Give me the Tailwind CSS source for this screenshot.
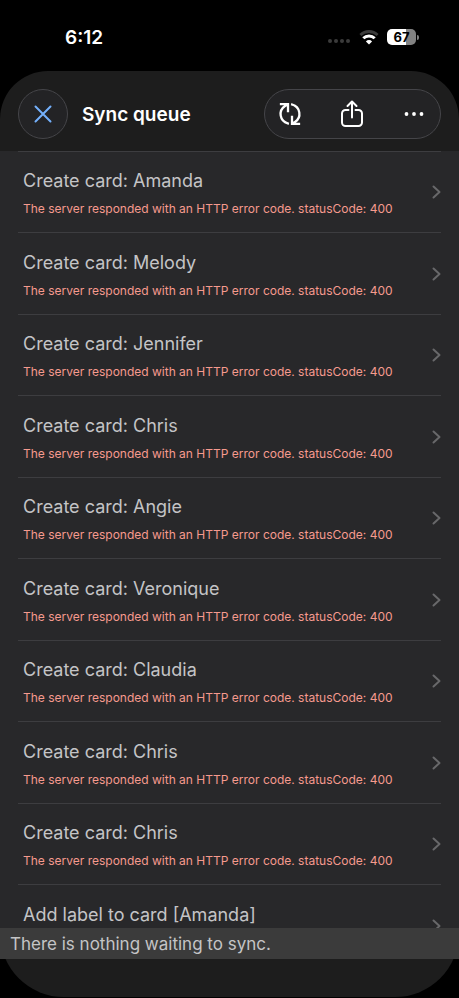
<!DOCTYPE html>
<html lang="en">
<head>
<meta charset="utf-8">
<meta name="viewport" content="width=device-width, initial-scale=1">
<title>Sync queue</title>
<script src="https://cdn.jsdelivr.net/npm/@tailwindcss/browser@4"></script>
</head>
<body class="bg-black font-['Inter','Liberation_Sans',sans-serif]">
<div class="flex h-screen flex-col bg-black pb-px">

  <!-- Status bar -->
  <div class="flex h-[71px] shrink-0 items-start justify-between pt-[26px] pr-10 pl-[65px]">
    <time class="text-[19px] leading-6 font-semibold text-white">6:12</time>
    <div class="flex h-[22px] items-center">
      <svg class="mt-2 mr-2 h-1 w-6" viewBox="0 0 24 4" fill="#3b3b3b" aria-hidden="true"><circle cx="3" cy="2" r="2"/><circle cx="9" cy="2" r="2"/><circle cx="15" cy="2" r="2"/><circle cx="21" cy="2" r="2"/></svg>
      <svg class="mr-2 h-[15px] w-5" viewBox="0 0 20 15" fill="none" aria-hidden="true">
        <path d="M1.400 5A12.300 12.300 0 0 1 18.600 5" stroke="#3b3b3b" stroke-width="2.800"/>
        <path d="M4.300 8.300a8.100 8.100 0 0 1 11.400 0" stroke="#fff" stroke-width="3"/>
        <path d="M10 14.500 6.900 11.400a4.400 4.400 0 0 1 6.200 0Z" fill="#fff"/>
      </svg>
      <div class="flex h-4 w-[29px] items-center justify-center rounded-[5px] bg-linear-to-r from-white from-67% to-[#828282] to-67% text-[13px] leading-4 font-bold text-black">67</div>
      <div class="ml-px h-[5px] w-[2px] rounded-r-full bg-[#828282]"></div>
    </div>
  </div>

  <!-- Header -->
  <header class="flex h-20 shrink-0 items-center rounded-t-[48px] bg-[#1d1d1d] px-[18px] pt-[6px]">
    <button type="button" aria-label="Close" class="flex size-[50px] shrink-0 items-center justify-center rounded-full border border-[#454549] bg-[#232325]">
      <svg class="size-[18px]" viewBox="0 0 18 18" fill="none" stroke="#74b0fb" stroke-width="2" stroke-linecap="round"><path d="m1.500 1.500 15 15m0-15-15 15"/></svg>
    </button>
    <h1 class="ml-[14px] pt-0.5 text-[19px] leading-6 font-semibold text-white">Sync queue</h1>
    <div class="ml-auto flex h-[50px] w-[177px] items-center justify-between rounded-full border border-[#454549] bg-[#232325] pr-3 pl-[11px]">
      <button type="button" aria-label="Sync" class="flex h-8 w-7 items-center justify-center">
        <svg class="h-6 w-6" viewBox="0 0 24 24" fill="none" stroke="#fff" stroke-width="2.300" stroke-linecap="square"><path d="M9.800 21.500A9.700 9.700 0 0 1 7 4L9 2.700M3 2.200h7v7M14.200 2.500A9.700 9.700 0 0 1 17 20L15 21.300M21 21.800h-7v-7"/></svg>
      </button>
      <button type="button" aria-label="Share" class="flex h-8 w-7 items-center justify-center">
        <svg class="h-7 w-6" viewBox="0 0 24 28" fill="none" stroke="#fff" stroke-width="2" stroke-linecap="round" stroke-linejoin="round"><path d="M8.500 10H5.500a3.500 3.500 0 0 0-3.500 3.500V22.500A3.500 3.500 0 0 0 5.500 26h13a3.500 3.500 0 0 0 3.500-3.500v-9a3.500 3.500 0 0 0-3.500-3.500h-3M12 17.500V2M7.500 6 12 1.500 16.500 6"/></svg>
      </button>
      <button type="button" aria-label="More" class="flex h-8 w-7 items-center justify-center">
        <svg class="h-5 w-5" viewBox="0 0 20 20" fill="#fff"><circle cx="2.500" cy="10" r="1.900"/><circle cx="10" cy="10" r="1.900"/><circle cx="17.500" cy="10" r="1.900"/></svg>
      </button>
    </div>
  </header>

  <!-- Queue -->
  <main class="min-h-0 flex-1 overflow-y-auto bg-[#28282a] px-[18px] [scrollbar-width:none]">
    <ul id="queue"></ul>
  </main>
  <p role="status" class="relative z-10 shrink-0 bg-[#3b3b3b] px-[10px] pt-[5px] pb-[3px] text-[17px] leading-[23px] text-[#c4c4c6]">There is nothing waiting to sync.</p>
  <div class="-mt-[26px] h-16 shrink-0 rounded-b-[64px] bg-[#1d1d1d]"></div>
</div>

<template id="row">
  <li class="h-[81px] border-t border-[#3d3d40] even:h-[82px]">
    <a href="#" class="flex h-full items-center justify-between pl-[5px]">
      <span class="block pt-0.5">
        <span data-title class="block text-[18px] leading-6 whitespace-nowrap text-[#c4c4c6]"></span>
        <span data-error class="mt-2 block h-4 text-[12px] leading-4 whitespace-nowrap text-[#f69a8e]"></span>
      </span>
      <svg class="h-[14px] w-[9px] shrink-0" viewBox="0 0 9 14" fill="none" stroke="#68686a" stroke-width="2" stroke-linecap="round" stroke-linejoin="round" aria-hidden="true"><path d="m1.500 1.500 6 5.500-6 5.500"/></svg>
    </a>
  </li>
</template>
<script>
const httpError = "The server responded with an HTTP error code. statusCode: 400";
const entries = [
  ["Create card: Amanda", httpError],
  ["Create card: Melody", httpError],
  ["Create card: Jennifer", httpError],
  ["Create card: Chris", httpError],
  ["Create card: Angie", httpError],
  ["Create card: Veronique", httpError],
  ["Create card: Claudia", httpError],
  ["Create card: Chris", httpError],
  ["Create card: Chris", httpError],
  ["Add label to card [Amanda]", ""],
];
const row = document.getElementById("row");
for (const [title, error] of entries) {
  const item = row.content.cloneNode(true);
  item.querySelector("[data-title]").textContent = title;
  item.querySelector("[data-error]").textContent = error;
  document.getElementById("queue").append(item);
}
</script>
</body>
</html>
